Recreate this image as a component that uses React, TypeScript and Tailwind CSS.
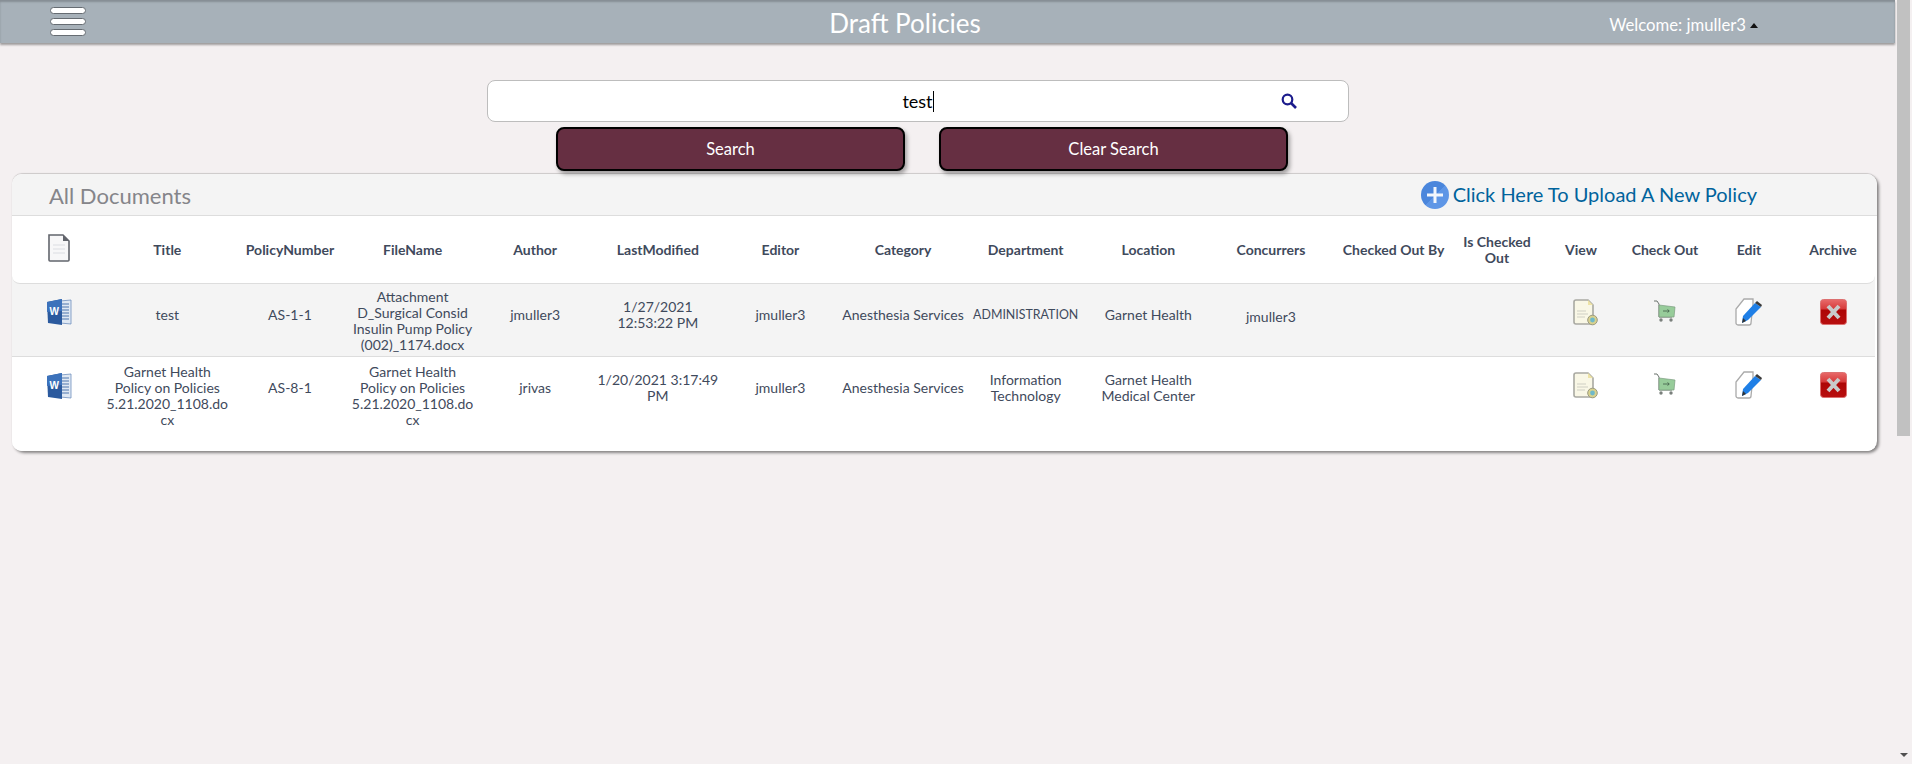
const headers = [
  "Title",
  "PolicyNumber",
  "FileName",
  "Author",
  "LastModified",
  "Editor",
  "Category",
  "Department",
  "Location",
  "Concurrers",
  "Checked Out By",
  "Is Checked Out",
  "View",
  "Check Out",
  "Edit",
  "Archive",
];

function BlankDocIcon() {
  return (
    <svg width="24" height="28" viewBox="0 0 24 28" className="mx-auto">
      <path d="M2 1h14l6 6v19a1 1 0 0 1-1 1H3a1 1 0 0 1-1-1z" fill="#f7f7f8" stroke="#62656c" strokeWidth="1.6" />
      <path d="M16 1v6h6z" fill="#62656c" />
      <path d="M6 11h12M6 15h12M6 19h12" stroke="#dcdde2" strokeWidth="1.2" />
    </svg>
  );
}

function WordIcon() {
  return (
    <svg width="26" height="28" viewBox="0 0 26 28" className="mx-auto">
      <path d="M14 3l11-1v24l-11-1z" fill="#dfe8f3" stroke="#6f8fbe" strokeWidth="0.8" />
      <path d="M16 6h7M16 9h7M16 12h7M16 15h7M16 18h7M16 21h7" stroke="#4f76ad" strokeWidth="1" />
      <path d="M1 4l15-3v26L2 25z" fill="#2b5a9e" />
      <path d="M1 4l15-3v12L1 14z" fill="#3c72bb" />
      <text x="3.5" y="17" fontSize="10" fontWeight="700" fill="#fff" fontFamily="Liberation Sans, sans-serif">
        W
      </text>
    </svg>
  );
}

function ViewIcon() {
  return (
    <svg width="25" height="27" viewBox="0 0 25 27" className="mx-auto">
      <path d="M3 1h12l5 5v18a1 1 0 0 1-1 1H3a2 2 0 0 1-2-2V3a2 2 0 0 1 2-2z" fill="#f9f7e6" stroke="#a9a9a2" strokeWidth="1.6" />
      <path d="M15 1v5h5z" fill="#eee3a6" />
      <path d="M4 12h9M4 15h11M4 18h8" stroke="#cfcfc4" strokeWidth="1" />
      <circle cx="19.5" cy="21" r="4.8" fill="#d9d28e" stroke="#9b9a80" />
      <circle cx="19.5" cy="21" r="2.4" fill="#6fb9c9" />
    </svg>
  );
}

function CartIcon() {
  return (
    <svg width="23" height="23" viewBox="0 0 23 23" className="mx-auto">
      <path d="M1 1h3l2 3v13h13" fill="none" stroke="#6a726d" strokeWidth="1" />
      <path d="M6 5l16 2-1 10H6z" fill="#97cc9a" stroke="#7b9c80" strokeWidth="0.7" />
      <path d="M10 11h6M14.5 9.5l1.8 1.5-1.8 1.5" fill="none" stroke="#3f5c46" strokeWidth="0.8" />
      <circle cx="8" cy="20" r="1.7" fill="#7a807c" />
      <circle cx="18" cy="20" r="1.7" fill="#7a807c" />
    </svg>
  );
}

function EditIcon() {
  return (
    <svg width="28" height="28" viewBox="0 0 28 28" className="mx-auto">
      <path d="M10 1h9v5l-2 19a2 2 0 0 1-2 2H4a2 2 0 0 1-2-2V11z" fill="#fff" stroke="#aaaaaa" strokeWidth="1.3" />
      <path d="M21 5l6 4-13 13-6 3 1-7z" fill="#1f7fe6" />
      <path d="M21 5l2-2 5 4-1 2z" fill="#3a3a3a" />
      <path d="M8 25l1-5 3 3z" fill="#333" />
    </svg>
  );
}

function ArchiveIcon() {
  return (
    <svg width="27" height="26" viewBox="0 0 27 26" className="mx-auto">
      <defs>
        <linearGradient id="archiveRed" x1="0" y1="0" x2="0" y2="1">
          <stop offset="0" stopColor="#e86a6a" />
          <stop offset="0.38" stopColor="#d63a3a" />
          <stop offset="0.42" stopColor="#ad0505" />
          <stop offset="1" stopColor="#b80f0f" />
        </linearGradient>
      </defs>
      <rect x="0.5" y="0.5" width="26" height="25" rx="3" fill="url(#archiveRed)" stroke="#dc7070" />
      <path d="M8 7l11 12M19 7L8 19" stroke="#c9c9c9" strokeWidth="4" />
    </svg>
  );
}

function PlusIcon() {
  return (
    <svg width="28" height="28" viewBox="0 0 28 28" className="shrink-0">
      <defs>
        <linearGradient id="plusBlue" x1="0" y1="0" x2="1" y2="1">
          <stop offset="0.5" stopColor="#4a86dc" />
          <stop offset="0.5" stopColor="#5e96e6" />
        </linearGradient>
      </defs>
      <circle cx="14" cy="14" r="14" fill="url(#plusBlue)" />
      <path d="M14 6v16M6 14h16" stroke="#f2f6fc" strokeWidth="3" />
    </svg>
  );
}

function SearchGlyph() {
  return (
    <svg width="16" height="16" viewBox="0 0 16 16">
      <circle cx="6.5" cy="6.5" r="4.8" fill="none" stroke="#1c1c8c" strokeWidth="2.2" />
      <path d="M10 10l5 5" stroke="#1c1c8c" strokeWidth="2.6" />
    </svg>
  );
}

function ActionCells() {
  return (
    <>
      <td className="align-top pt-[15px] pl-[9px]">
        <ViewIcon />
      </td>
      <td className="align-top pt-[16px] pr-[2px]">
        <CartIcon />
      </td>
      <td className="align-top pt-[14px] pr-[2px]">
        <EditIcon />
      </td>
      <td className="align-top pt-[15px]">
        <ArchiveIcon />
      </td>
    </>
  );
}

export default function App() {
  return (
    <div className="h-[764px] overflow-hidden flex bg-[#f4f0f1] text-[#3f4a5c] font-['Lato','Noto_Sans',sans-serif]">
      <div className="flex-1 min-w-0">
        <header className="h-[43px] bg-[#a7b1b9] shadow-[0_2px_2px_rgba(0,0,0,0.35),inset_0_2px_2px_rgba(0,0,0,0.2)] grid grid-cols-3 items-center pl-[50px] pr-[137px]">
          <div className="flex flex-col gap-[4px] w-[36px]">
            <span className="h-[7px] rounded-full bg-white border-[1.5px] border-[#666c72]" />
            <span className="h-[7px] rounded-full bg-white border-[1.5px] border-[#666c72]" />
            <span className="h-[7px] rounded-full bg-white border-[1.5px] border-[#666c72]" />
          </div>
          <h1 className="text-center text-[26px] leading-none text-white pt-[2px] pl-[2px]">Draft Policies</h1>
          <div className="flex items-center justify-end gap-[4px] text-[16.7px] text-white pt-[8px]">
            <span>Welcome: jmuller3</span>
            <span className="w-0 h-0 border-x-[4px] border-x-transparent border-b-[5px] border-b-[#111]" />
          </div>
        </header>

        <div className="mt-[37px] w-[862px] h-[42px] ml-[487px] bg-white border border-[#bdbdbd] rounded-[8px] flex items-center">
          <div className="flex-1 flex justify-center pl-[67px] text-black text-[18px]">
            <span className="border-r border-black leading-[21px]">test</span>
          </div>
          <div className="mr-[51px] flex">
            <SearchGlyph />
          </div>
        </div>

        <div className="mt-[5px] ml-[556px] flex gap-[34px]">
          <button className="w-[349px] h-[44px] pt-[1px] bg-[#662f42] border-2 border-black rounded-[8px] text-white text-[16.5px] shadow-[2px_3px_4px_rgba(0,0,0,0.35)]">
            Search
          </button>
          <button className="w-[349px] h-[44px] pt-[1px] bg-[#662f42] border-2 border-black rounded-[8px] text-white text-[16.5px] shadow-[2px_3px_4px_rgba(0,0,0,0.35)]">
            Clear Search
          </button>
        </div>

        <section className="mt-[3px] ml-[12px] mr-[18px] h-[277px] bg-white rounded-[10px] overflow-hidden shadow-[2px_2px_3px_rgba(0,0,0,0.45),0_-1px_1px_rgba(0,0,0,0.15)]">
          <div className="h-[42px] bg-[#f4f4f4] border-b border-[#dddddd] flex items-center pl-[37px] pr-[120px]">
            <span className="text-[22px] text-[#85858a] pt-[2px]">All Documents</span>
            <a className="ml-auto flex items-center gap-[4px] text-[20px] text-[#00639c]">
              <PlusIcon />
              <span className="pb-[2px]">Click Here To Upload A New Policy</span>
            </a>
          </div>
          <table className="w-[1863px] table-fixed text-center text-[14px] leading-[16px] border-separate border-spacing-0 bg-[#f4f4f4]">
            <colgroup>
              <col className="w-[94px]" />
              {headers.slice(0, 11).map((h) => (
                <col key={h} />
              ))}
              <col className="w-[84px]" />
              <col className="w-[84px]" />
              <col className="w-[84px]" />
              <col className="w-[84px]" />
              <col className="w-[84px]" />
            </colgroup>
            <thead>
              <tr className="h-[68px] [&>th]:bg-white [&>th]:border-b [&>th]:border-[#dddddd]">
                <th className="align-top pt-[18px] rounded-bl-[8px]">
                  <BlankDocIcon />
                </th>
                {headers.map((h, i) => (
                  <th
                    key={h}
                    className={
                      i === headers.length - 1
                        ? "font-bold pt-[1px] rounded-br-[8px]"
                        : "font-bold pt-[1px]"
                    }
                  >
                    {h}
                  </th>
                ))}
              </tr>
            </thead>
            <tbody>
              <tr className="h-[73px] bg-[#f4f4f4] [&>td]:border-b [&>td]:border-[#dddddd]">
                <td className="align-top pt-[14px]">
                  <WordIcon />
                </td>
                <td className="pb-[10px]">test</td>
                <td className="pb-[10px]">AS-1-1</td>
                <td className="pt-[2px]">
                  Attachment D_Surgical Consid Insulin Pump Policy (002)_1174.docx
                </td>
                <td className="pb-[10px]">jmuller3</td>
                <td className="pb-[10px]">
                  1/27/2021
                  <br />
                  12:53:22 PM
                </td>
                <td className="pb-[10px]">jmuller3</td>
                <td className="pb-[10px]">Anesthesia Services</td>
                <td className="pb-[10px] text-[12.4px]">ADMINISTRATION</td>
                <td className="pb-[10px]">Garnet Health</td>
                <td className="pb-[6px]">jmuller3</td>
                <td />
                <td />
                <ActionCells />
              </tr>
              <tr className="h-[94px] bg-white">
                <td className="align-top pt-[15px]">
                  <WordIcon />
                </td>
                <td className="pb-[16px]">
                  Garnet Health
                  <br />
                  Policy on Policies
                  <br />
                  5.21.2020_1108.do
                  <br />
                  cx
                </td>
                <td className="pb-[32px]">AS-8-1</td>
                <td className="pb-[16px]">
                  Garnet Health
                  <br />
                  Policy on Policies
                  <br />
                  5.21.2020_1108.do
                  <br />
                  cx
                </td>
                <td className="pb-[32px]">jrivas</td>
                <td className="pb-[32px]">1/20/2021 3:17:49 PM</td>
                <td className="pb-[32px]">jmuller3</td>
                <td className="pb-[32px]">Anesthesia Services</td>
                <td className="pb-[32px]">Information Technology</td>
                <td className="pb-[32px]">Garnet Health Medical Center</td>
                <td />
                <td />
                <td />
                <ActionCells />
              </tr>
            </tbody>
          </table>
        </section>
      </div>

      <div className="w-[17px] shrink-0 flex flex-col">
        <div className="h-[436px] ml-[2px] mr-[2px] bg-[#c1c1c1]" />
        <div className="mt-auto mb-[7px] self-center w-0 h-0 border-x-[4px] border-x-transparent border-t-[4px] border-t-[#505050]" />
      </div>
    </div>
  );
}
